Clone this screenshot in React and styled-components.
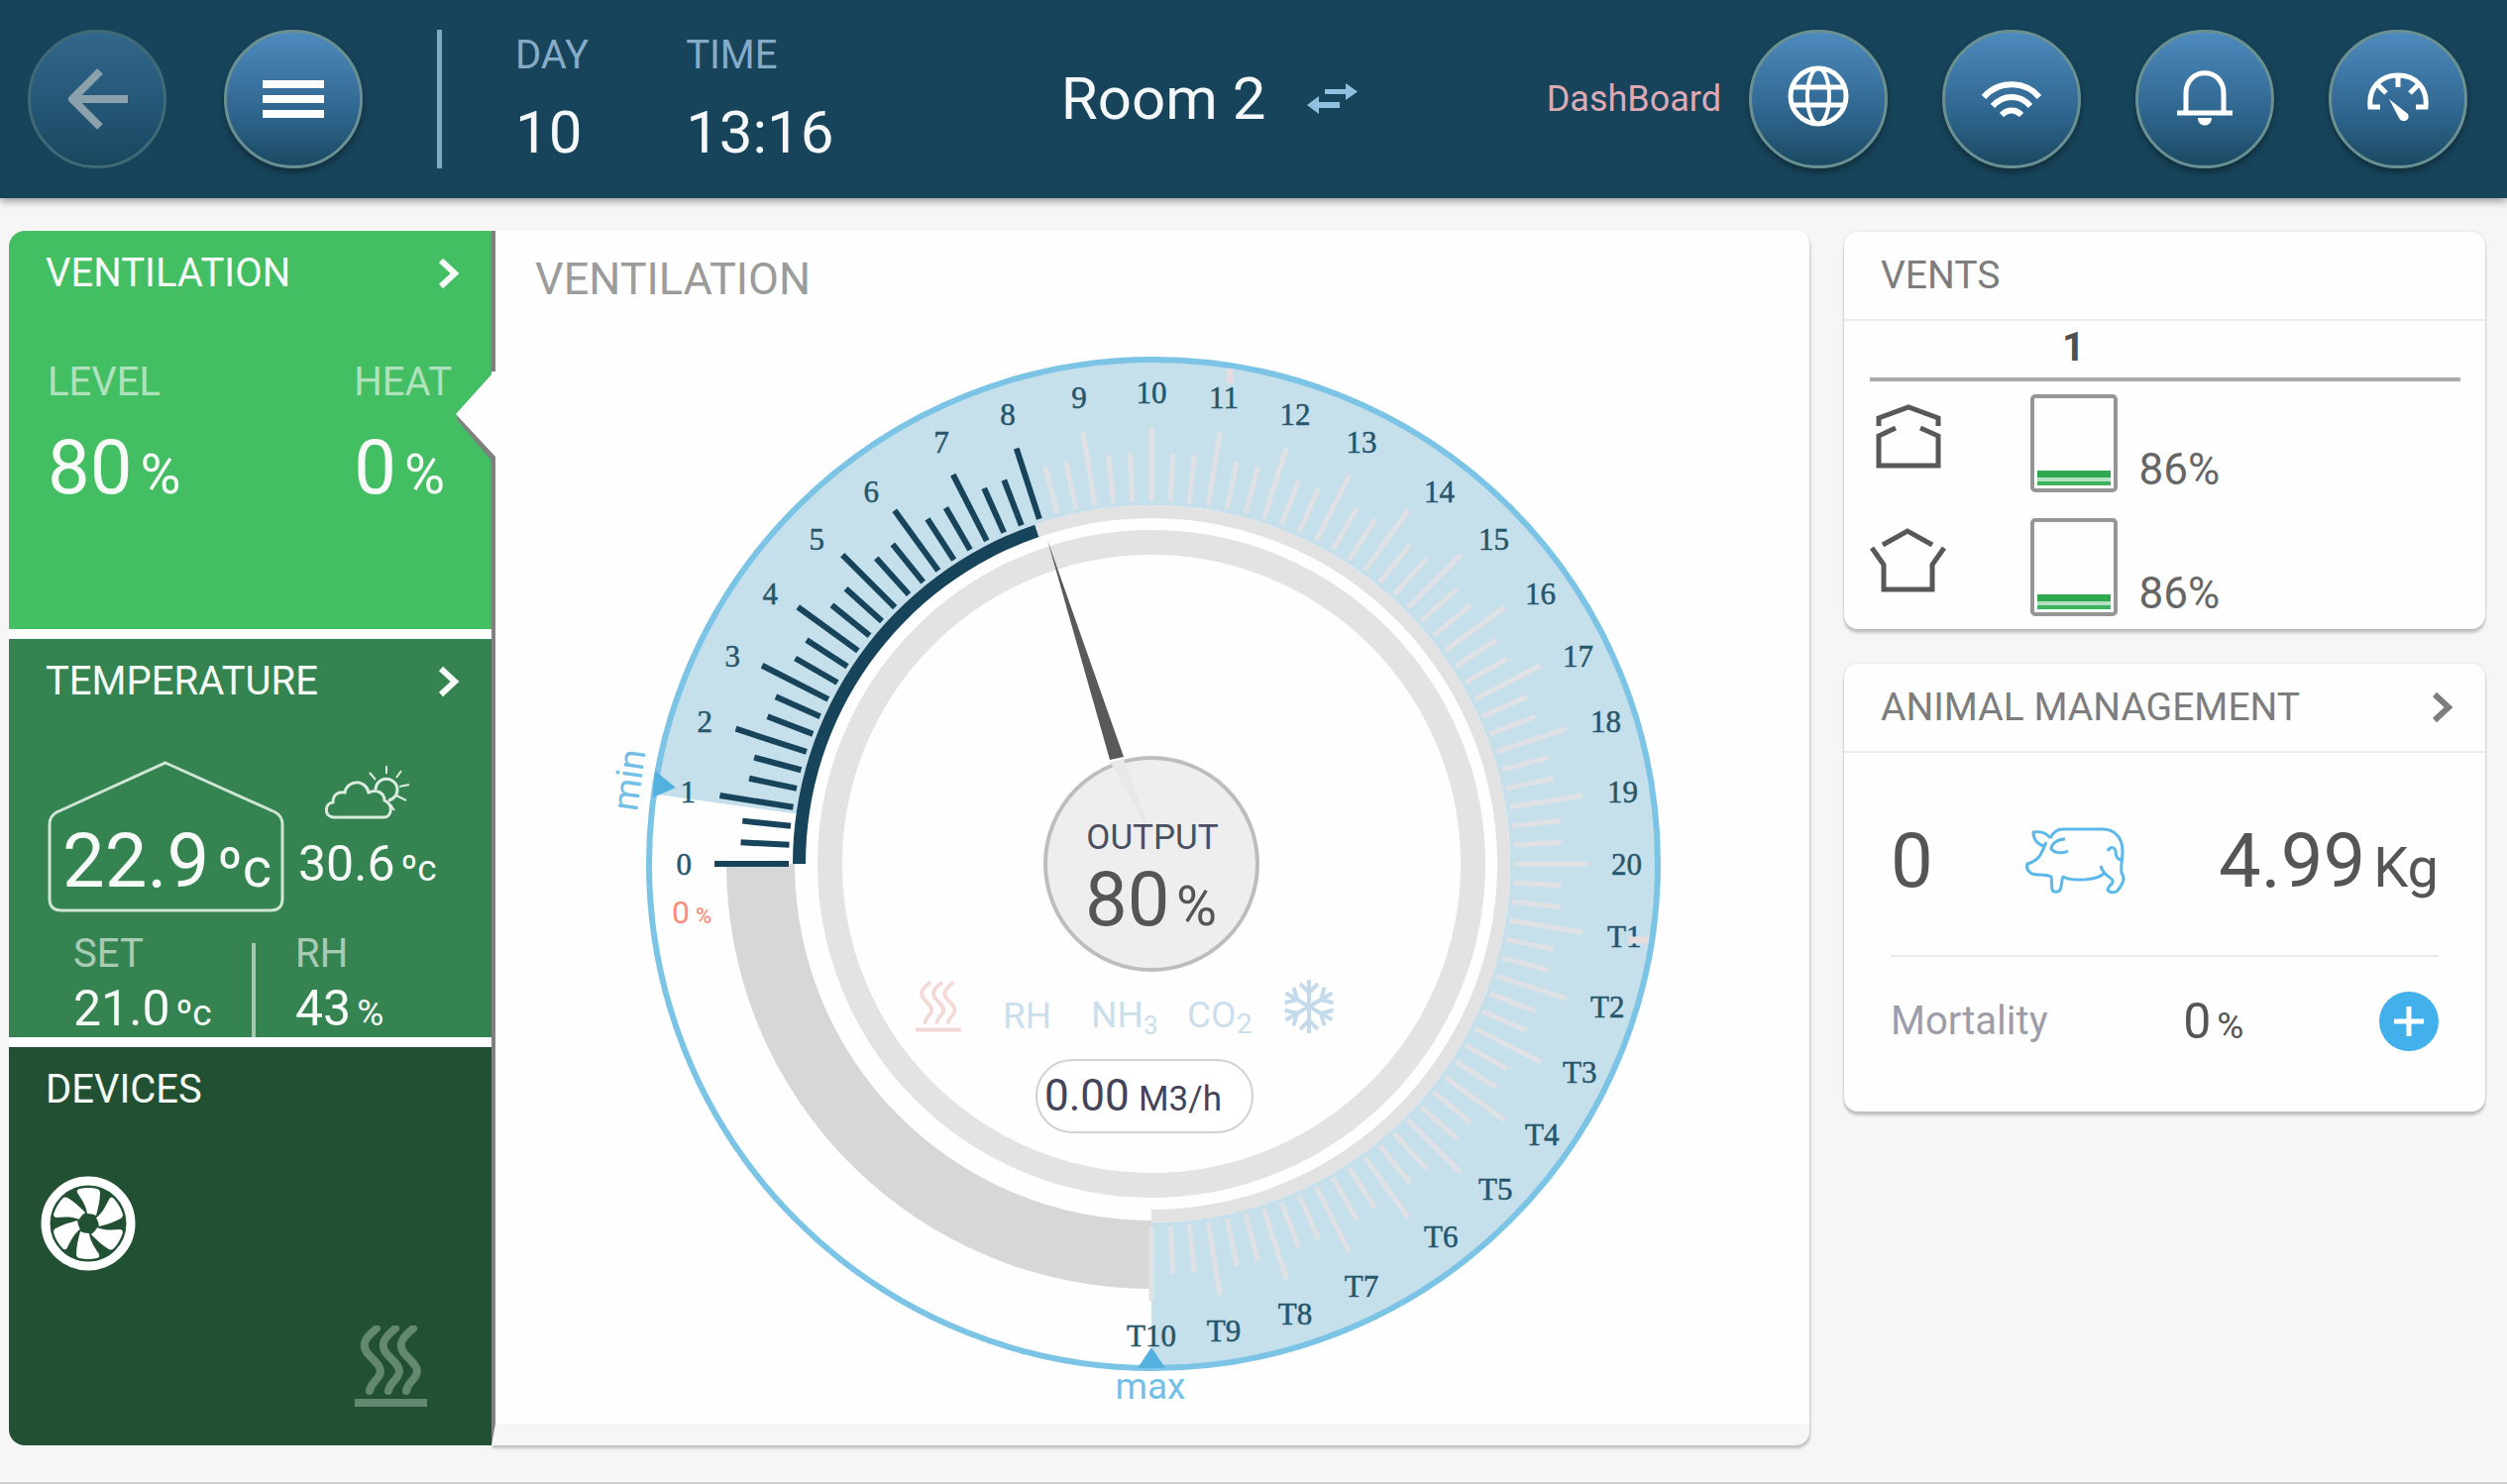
import React, { useState } from 'react';
import styled, { createGlobalStyle } from 'styled-components';

const GlobalStyle = createGlobalStyle`
  * {
    box-sizing: border-box;
    margin: 0;
    padding: 0;
  }

  body {
    font-family: Roboto, "Liberation Sans", sans-serif;
    background: #f6f6f6;
  }

  button {
    font: inherit;
    color: inherit;
    border: none;
    background: none;
    cursor: pointer;
  }

  svg {
    display: block;
  }
`;

const Page = styled.div`
  min-height: 100vh;
  border-bottom: 2px solid #cfcfcf;
`;

/* ---------- top bar ---------- */

const Header = styled.header`
  position: relative;
  display: flex;
  align-items: center;
  height: 200px;
  padding: 0 40px 0 28px;
  color: #f4f8fa;
  background: #17445a;
  box-shadow: 0 3px 8px rgba(0, 0, 0, 0.4);
`;

const ButtonGroup = styled.nav`
  display: flex;
  gap: ${(props) => props.$gap};
`;

const RoundButton = styled.button`
  display: flex;
  align-items: center;
  justify-content: center;
  width: 140px;
  height: 140px;
  border: 3px solid #6a9092;
  border-radius: 50%;
  background: linear-gradient(#4d8abd, #2f668f 60%, #1a4a62);
  box-shadow: 0 4px 7px rgba(0, 0, 0, 0.35);

  &:disabled {
    opacity: 0.5;
    box-shadow: none;
  }
`;

const HeaderLine = styled.div`
  width: 5px;
  height: 140px;
  margin: 0 74px 0 75px;
  background: #82a9c2;
`;

const Clock = styled.dl`
  display: flex;
  gap: 98px;

  dt {
    font-size: 40px;
    line-height: 48px;
    color: #86abc6;
  }

  dd {
    margin-top: 20px;
    font-size: 60px;
    line-height: 68px;
  }
`;

const RoomTitle = styled.div`
  flex: 1;
  display: flex;
  align-items: center;
  justify-content: center;
  gap: 42px;
  padding-left: 39px;

  h1 {
    font-size: 60px;
    line-height: 68px;
    font-weight: 400;
  }
`;

const DashLabel = styled.a`
  margin-right: 28px;
  font-size: 36px;
  line-height: 44px;
  color: #dcaab5;
  text-decoration: none;
`;

/* ---------- page body ---------- */

const Body = styled.main`
  display: grid;
  grid-template-columns: 487px minmax(0, 1fr) 647px;
  padding: 33px 22px 37px 9px;
`;

const Sidebar = styled.aside`
  display: flex;
  flex-direction: column;
  gap: 10px;
  background: #fff;
  border-radius: 16px 0 0 16px;
  overflow: hidden;
`;

const Tile = styled.section`
  display: flex;
  flex-direction: column;
  min-height: 402px;
  padding: 19px 32px 0 37px;
  color: #f6fbf7;
  background: ${(props) => props.$color};
`;

const TileHead = styled.div`
  display: flex;
  align-items: center;
  justify-content: space-between;

  h2 {
    font-size: 40px;
    line-height: 48px;
    font-weight: 400;
  }
`;

const StatRow = styled.div`
  display: flex;
  justify-content: space-between;
  padding: 62px 8px 0 2px;
`;

const Stat = styled.div`
  display: flex;
  flex-direction: column;
  gap: ${(props) => props.$gap};
`;

const StatLabel = styled.span`
  font-size: 40px;
  line-height: 48px;
  opacity: 0.6;
`;

const BigValue = styled.span`
  display: flex;
  align-items: baseline;
  gap: 8px;
  font-size: 76px;
  line-height: 84px;

  small {
    font-size: 56px;
    line-height: 56px;
  }
`;

const Value = styled.span`
  display: flex;
  align-items: baseline;
  gap: 6px;
  font-size: 50px;
  line-height: 56px;

  small {
    font-size: 37px;
    line-height: 37px;
  }
`;

const ClimateRow = styled.div`
  display: flex;
  align-items: flex-end;
  gap: 14px;
  margin: 56px -20px 0 2px;
`;

const House = styled.div`
  position: relative;
  width: 239px;
  padding: 59px 0 9px 15px;

  svg {
    position: absolute;
    top: 0;
    left: 0;
  }
`;

const Outside = styled.div`
  display: flex;
  flex-direction: column;
  align-items: center;
  gap: 17px;
  padding-bottom: 20px;
`;

const ClimateFoot = styled.div`
  display: flex;
  flex: 1;
  padding: 19px 0 0 28px;
`;

const SetCell = styled(Stat)`
  width: 180px;
`;

const FootLine = styled.div`
  width: 4px;
  margin: 13px 40px 0 0;
  background: #fff;
  opacity: 0.55;
`;

const DeviceArea = styled.div`
  display: flex;
  flex: 1;
  justify-content: space-between;
  padding: 62px 33px 38px 0;

  svg:first-child {
    margin-left: -6px;
  }

  svg:last-child {
    align-self: flex-end;
  }
`;

const MainPanel = styled.section`
  position: relative;
  display: flex;
  flex-direction: column;
  border-left: 4px solid #808080;
  border-bottom: 22px solid #f6f6f6;
  border-radius: 0 14px 14px 0;
  background: #fefefe;
  box-shadow: 1px 3px 3px rgba(0, 0, 0, 0.22);
  margin-right: 35px;

  h2 {
    padding: 23px 40px 1px;
    font-size: 45px;
    line-height: 52px;
    font-weight: 400;
    color: #9b9b9b;
  }
`;

const Notch = styled.svg`
  position: absolute;
  top: 142px;
  left: -40px;
`;

const Dial = styled.svg`
  width: 100%;
  height: auto;
`;

const Cards = styled.div`
  display: flex;
  flex-direction: column;
  gap: 35px;
  padding-top: 1px;
`;

const Card = styled.section`
  border-radius: 14px;
  background: #fefefe;
  box-shadow: 0 4px 3px rgba(0, 0, 0, 0.2), 0 0 3px rgba(0, 0, 0, 0.12);
`;

const CardHead = styled.div`
  display: flex;
  align-items: center;
  justify-content: space-between;
  padding: 20px 32px 20px 37px;
  border-bottom: 2px solid #ececec;
  color: #7d7d7d;

  h2 {
    font-size: 39px;
    line-height: 48px;
    font-weight: 400;
  }
`;

const VentTable = styled.table`
  width: 596px;
  margin: 0 auto;
  border-collapse: collapse;
  table-layout: fixed;

  thead tr {
    border-bottom: 4px solid #aaa;
  }

  thead th {
    padding: 3px 0 6px;
    font-size: 40px;
    line-height: 48px;
    font-weight: 700;
    color: #505050;
  }

  tbody th {
    padding-top: 23px;
    vertical-align: top;
  }

  tbody td {
    padding: 13px 0 12px;
    vertical-align: top;
  }
`;

const IconCol = styled.col`
  width: 162px;
`;

const BoxCol = styled.col`
  width: 88px;
`;

const VentBox = styled.div`
  display: flex;
  align-items: flex-end;
  height: 99px;
  padding: 3px;
  border: 4px solid #969696;
  border-radius: 5px;

  div {
    flex: 1;
    height: 15px;
    border-top: 7px solid #2fa84f;
    border-bottom: 4px solid #3db35e;
    background: #b4dfc0;
  }
`;

const VentValue = styled.span`
  display: block;
  padding: 52px 0 0 22px;
  font-size: 44px;
  line-height: 48px;
  color: #666;
`;

const HerdRow = styled.div`
  display: flex;
  align-items: center;
  justify-content: space-between;
  margin: 0 47px;
  padding: 67px 0 53px;
  border-bottom: 2px solid #e9e9e9;
  color: #555;
`;

const MortalityRow = styled.div`
  display: flex;
  align-items: center;
  justify-content: space-between;
  margin: 0 47px;
  padding: 35px 0 61px;
  color: #555;
`;

const MortalityLabel = styled.span`
  font-size: 40px;
  line-height: 48px;
  color: #9d9da9;
`;

const AddButton = styled.button`
  display: flex;
  align-items: center;
  justify-content: center;
  width: 60px;
  height: 60px;
  border-radius: 50%;
  background: #42b0ea;
`;

/* ---------- icons ---------- */

const BackIcon = () => (
  <svg width="62" height="62" viewBox="0 0 62 62" fill="none" stroke="#fff" strokeWidth="8">
    <path d="M62 31H7M34 3L6 31l28 28" strokeLinejoin="round" />
  </svg>
);

const MenuIcon = () => (
  <svg width="62" height="38" viewBox="0 0 62 38" fill="#fff">
    <rect width="62" height="8" />
    <rect y="15" width="62" height="8" />
    <rect y="30" width="62" height="8" />
  </svg>
);

const SwapIcon = () => (
  <svg width="51" height="32" viewBox="0 0 51 32" fill="#8fc0df">
    <path d="M18 6h21V0l12 8.500L39 17v-6H18z" />
    <path d="M33 25H12v6L0 22l12-9v6h21z" />
  </svg>
);

const GlobeIcon = () => (
  <svg width="62" height="68" viewBox="0 0 62 68" fill="none" stroke="#fff" strokeWidth="5">
    <circle cx="31" cy="31" r="28" />
    <ellipse cx="31" cy="31" rx="11" ry="28" strokeWidth="4" />
    <path d="M5 22h52M5 40h52" />
  </svg>
);

const WifiIcon = () => (
  <svg width="60" height="36" viewBox="0 0 60 36" fill="none" stroke="#fff" strokeWidth="6">
    <path d="M2 16C17 -1 43 -1 58 16M11 25c11-12 27-12 38 0M20 34c6-6 14-6 20 0" />
  </svg>
);

const BellIcon = () => (
  <svg width="56" height="58" viewBox="0 0 56 58" fill="none" stroke="#fff" strokeWidth="5">
    <path d="M9 42V23C9 -4 47 -4 47 23v19" />
    <path d="M0 43h56" />
    <path d="M21 48h14c0 10-14 10-14 0z" fill="#fff" stroke="none" />
  </svg>
);

const GaugeIcon = () => (
  <svg width="62" height="54" viewBox="0 0 62 54" fill="none" stroke="#fff" strokeWidth="5">
    <path d="M13 35H3C1 16 13 3 31 3s30 13 28 32H49M31 3v12M11 13l8 8M51 13l-8 8" />
    <path d="M22 27l19 15c3 7-6 10-9 4z" fill="#fff" stroke="none" />
  </svg>
);

const ChevronIcon = () => (
  <svg width="23" height="32" viewBox="0 0 23 32" fill="none" stroke="currentColor" strokeWidth="6">
    <path d="M4 3l14 13L4 29" />
  </svg>
);

const CloudIcon = () => (
  <svg width="86" height="54" viewBox="0 0 86 54" fill="none" stroke="#dcebe0" strokeWidth="3">
    <path d="M9 52C-1 52-1 38 8 37C8 29 13 26 20 27C22 14 41 13 44 27C53 23 60 28 60 35C69 39 68 52 59 52z" />
    <path d="M51 24a11 11 0 1 1 13 11" />
    <path d="M62 8V0M72 12l5-7M75 21l10-2M72 30l10 5M51 14l-6-7M66 39l4 6" strokeWidth="2" />
  </svg>
);

const FanIcon = () => (
  <svg width="98" height="98" viewBox="-49 -49 98 98" fill="#fff">
    <circle r="43" fill="none" stroke="#fff" strokeWidth="9" />
    {[0, 60, 120, 180, 240, 300].map((angle) => (
      <path
        key={angle}
        transform={`rotate(${angle})`}
        d="M-1 -10C-2 -18 -7 -25 -11 -31Q-12 -34 -9 -35Q1 -37 9 -35Q12 -34 12 -31C12 -23 10 -16 8 -8Q4 -10 -1 -10z"
      />
    ))}
  </svg>
);

const wave = 'M22 3C10 13 7 19 12 27C18 35 29 41 25 50C22 56 16 59 15 66';

const HeatIcon = ({ x, y, width, height, color, thickness }) => (
  <svg x={x} y={y} width={width} height={height} viewBox="0 0 73 83" fill="none" stroke={color} strokeWidth={thickness}>
    <path d={wave} strokeLinecap="round" />
    <path d={wave} strokeLinecap="round" transform="translate(19 0)" />
    <path d={wave} strokeLinecap="round" transform="translate(37 0)" />
    <path d="M0 78h73" />
  </svg>
);

const RoofVentIcon = () => (
  <svg width="77" height="66" viewBox="0 0 77 66" fill="none" stroke="#585858" strokeWidth="5">
    <path d="M9 22v-8L39 3l30 11v8" />
    <path d="M26 24L9 32v30h60V32l-18-8" />
  </svg>
);

const WallVentIcon = () => (
  <svg width="77" height="66" viewBox="0 0 77 66" fill="none" stroke="#585858" strokeWidth="5">
    <path d="M13 17L38 3l25 14" />
    <path d="M2 20l12 17v25h49V37l12-17" />
  </svg>
);

const PigIcon = () => (
  <svg width="102" height="68" viewBox="0 0 102 68" fill="none" stroke="#5cb8e8" strokeWidth="3" strokeLinejoin="round">
    <path d="M25 11C28 5 32 2 38 2h40c13 0 20 10 20 22c0 8-2 14-1 22c4 6 2 10-4 18c-3 3-9 2-10-1c0-4 6-5 5-9c-1-4-9-4-12-15" />
    <path d="M80 46C73 54 48 55 38 50c-2 5-1 9-3 13c-1 3-7 3-8 0c-1-5 0-9-1-13C19 46 10 50 5 46C1 43 1 40 2 37C13 34 16 28 21 15" />
    <path d="M25 11C20 4 14 4 8 5c0 7 4 13 12 14" />
    <path d="M40 12c-8 0-14 5-14 10c3 4 12 5 17 2" />
    <path d="M83 24c3-5 7-4 8 0c0 5 1 8 5 9" />
  </svg>
);

const PlusIcon = () => (
  <svg width="30" height="30" viewBox="0 0 30 30" stroke="#fff" strokeWidth="5">
    <path d="M15 0v30M0 15h30" />
  </svg>
);

/* ---------- dial ---------- */

// angle 0 points left, goes clockwise
const point = (angle, radius) => {
  const rad = (angle * Math.PI) / 180;
  return [-Math.cos(rad) * radius, -Math.sin(rad) * radius];
};

const ringPath = (from, to, outer, inner) => {
  const large = to - from > 180 ? 1 : 0;
  return [
    `M${point(from, outer)}`,
    `A${outer} ${outer} 0 ${large} 1 ${point(to, outer)}`,
    `L${point(to, inner)}`,
    `A${inner} ${inner} 0 ${large} 0 ${point(from, inner)}`,
    'Z',
  ].join(' ');
};

// label anchors for a quarter of the dial, from the side up to the top
const anchors = [
  [464, 0], [460, 73], [443, 144], [415, 210], [377, 273],
  [330, 328], [275, 376], [212, 426], [145, 454], [73, 471], [0, 476],
];

const dialLabels = Array.from({ length: 31 }, (_, i) => {
  const step = i <= 10 ? i : Math.abs(20 - i);
  const [x, y] = anchors[step];
  let anchor = 'middle';
  if (step < 7) anchor = i < 10 ? 'end' : 'start';
  return {
    text: i <= 20 ? String(i) : `T${i - 20}`,
    x: i < 10 ? -x : x,
    y: (i <= 20 ? -y : y) + 11,
    anchor,
  };
});

const ticks = Array.from({ length: 91 }, (_, i) => i);

const LabelText = styled.text`
  font-family: "Liberation Serif", serif;
  font-size: 31px;
  fill: #26566b;
  stroke: #26566b;
  stroke-width: 0.5px;
`;

const DialText = styled.text`
  font-size: ${(props) => props.$size}px;
  fill: ${(props) => props.$color};
`;

const VentDial = () => (
  <Dial viewBox="-662 -563 1326 1126" role="img" aria-label="Ventilation output">
    <path d={ringPath(8, 270, 509, 362)} fill="#c5dfeb" />
    <circle cx="2" r="509" fill="none" stroke="#7cc4e6" strokeWidth="6" />
    <path d={ringPath(270, 360, 429, 360)} fill="#d7d7d7" />
    <path d={ringPath(71, 270, 362, 349)} fill="#e2e2e3" />
    <path d={ringPath(0, 71, 362, 349)} fill="#17445a" />
    <circle r="324.500" fill="none" stroke="#e3e3e3" strokeWidth="25" />

    {ticks.map((i) => {
      const [x1, y1] = point(i * 3, 366);
      const [x2, y2] = point(i * 3, i % 3 === 0 ? 441 : 415);
      const active = i * 3 <= 72;
      return (
        <line
          key={i}
          x1={x1}
          y1={y1}
          x2={x2}
          y2={y2}
          stroke={active ? '#17445a' : '#e0e1e4'}
          strokeWidth={active ? 6 : 5}
        />
      );
    })}

    <path d="M-501 -94L-480 -77L-503 -67z" fill="#53b0df" />
    <path d="M0 488L14 509H-14z" fill="#53b0df" />

    {dialLabels.map((label) => (
      <LabelText key={label.text} x={label.x} y={label.y} textAnchor={label.anchor}>
        {label.text}
      </LabelText>
    ))}
    <path d="M79 -500v15M482 77h20" stroke="#e4dcdf" strokeWidth="7" />

    <DialText $size={37} $color="#72c0e6" textAnchor="middle" transform="translate(-515 -83) rotate(-82)">
      min
    </DialText>
    <DialText $size={37} $color="#72c0e6" textAnchor="middle" x="-1" y="540">max</DialText>
    <DialText $size={32} $color="#f98d7a" x="-484" y="60">0</DialText>
    <DialText $size={22} $color="#f98d7a" x="-460" y="60" fontWeight="500">%</DialText>

    <path d="M-105 -327L-28 -108L-42 -105z" fill="#595959" />
    <circle r="107" fill="#eee" stroke="#bdbdbd" strokeWidth="4" />
    <path d="M-42 -103L-28 -106L0 -30z" fill="#e8e8e8" />

    <DialText $size={35} $color="#4b4f61" textAnchor="middle" x="1" y="-15">OUTPUT</DialText>
    <DialText $size={76} $color="#555" x="-67" y="62">80</DialText>
    <DialText $size={56} $color="#555" x="25" y="62">%</DialText>

    <HeatIcon x={-238} y={118} width={46} height={53} color="#f3d8d5" thickness={6} />
    <DialText $size={37} $color="#cbdeec" x="-150" y="166">RH</DialText>
    <DialText $size={37} $color="#cbdeec" x="-61" y="165">NH</DialText>
    <DialText $size={26} $color="#cbdeec" x="-8" y="172">3</DialText>
    <DialText $size={37} $color="#cbdeec" x="36" y="165">CO</DialText>
    <DialText $size={28} $color="#cbdeec" x="86" y="171">2</DialText>
    <g transform="translate(159 144)" fill="none" stroke="#c4daea" strokeWidth="4">
      {[0, 60, 120, 180, 240, 300].map((angle) => (
        <path key={angle} transform={`rotate(${angle})`} d="M0 0V-27M-9 -23l9 9l9 -9" />
      ))}
    </g>

    <rect x="-116" y="198" width="218" height="73" rx="36" fill="#fff" stroke="#d2d2d4" strokeWidth="2" />
    <DialText $size={44} $color="#43445a" x="-108" y="249">0.00</DialText>
    <DialText $size={35} $color="#43445a" x="-13" y="249">M3/h</DialText>
  </Dial>
);

const vents = [
  { name: 'Roof vent', icon: <RoofVentIcon />, value: 86 },
  { name: 'Wall vent', icon: <WallVentIcon />, value: 86 },
];

const App = () => {
  const [mortality, setMortality] = useState(0);

  return (
    <Page>
      <GlobalStyle />
      <Header>
        <ButtonGroup $gap="58px">
          <RoundButton aria-label="Back" disabled><BackIcon /></RoundButton>
          <RoundButton aria-label="Menu"><MenuIcon /></RoundButton>
        </ButtonGroup>
        <HeaderLine />
        <Clock>
          <div>
            <dt>DAY</dt>
            <dd>10</dd>
          </div>
          <div>
            <dt>TIME</dt>
            <dd>13:16</dd>
          </div>
        </Clock>
        <RoomTitle>
          <h1>Room 2</h1>
          <button aria-label="Switch room"><SwapIcon /></button>
        </RoomTitle>
        <DashLabel href="#dashboard">DashBoard</DashLabel>
        <ButtonGroup $gap="55px">
          <RoundButton aria-label="Language"><GlobeIcon /></RoundButton>
          <RoundButton aria-label="Network"><WifiIcon /></RoundButton>
          <RoundButton aria-label="Alarms"><BellIcon /></RoundButton>
          <RoundButton aria-label="Dashboard"><GaugeIcon /></RoundButton>
        </ButtonGroup>
      </Header>

      <Body>
        <Sidebar>
          <Tile $color="#43be63">
            <TileHead>
              <h2>VENTILATION</h2>
              <button aria-label="Open ventilation"><ChevronIcon /></button>
            </TileHead>
            <StatRow>
              <Stat $gap="20px">
                <StatLabel>LEVEL</StatLabel>
                <BigValue>80<small>%</small></BigValue>
              </Stat>
              <Stat $gap="20px">
                <StatLabel>HEAT</StatLabel>
                <BigValue>0<small>%</small></BigValue>
              </Stat>
            </StatRow>
          </Tile>

          <Tile $color="#348351">
            <TileHead>
              <h2>TEMPERATURE</h2>
              <button aria-label="Open temperature"><ChevronIcon /></button>
            </TileHead>
            <ClimateRow>
              <House>
                <svg width="239" height="153" viewBox="0 0 239 153" fill="none" stroke="#cfe6d6" strokeWidth="3">
                  <path d="M119 2L230 52Q237 56 237 64V139Q237 151 225 151H14Q2 151 2 139V64Q2 56 9 52z" />
                </svg>
                <BigValue>22.9<small>ºc</small></BigValue>
              </House>
              <Outside>
                <CloudIcon />
                <Value>30.6<small>ºc</small></Value>
              </Outside>
            </ClimateRow>
            <ClimateFoot>
              <SetCell $gap="3px">
                <StatLabel>SET</StatLabel>
                <Value>21.0<small>ºc</small></Value>
              </SetCell>
              <FootLine />
              <Stat $gap="3px">
                <StatLabel>RH</StatLabel>
                <Value>43<small>%</small></Value>
              </Stat>
            </ClimateFoot>
          </Tile>

          <Tile $color="#225033">
            <TileHead>
              <h2>DEVICES</h2>
            </TileHead>
            <DeviceArea>
              <FanIcon />
              <HeatIcon width={73} height={83} color="#64886f" thickness={8} />
            </DeviceArea>
          </Tile>
        </Sidebar>

        <MainPanel>
          <Notch width="40" height="92" viewBox="0 0 40 92">
            <path d="M1 43L40 86V90H36L2 50z" fill="#808080" />
            <path d="M0 43L36 3V0H40V86z" fill="#fefefe" />
          </Notch>
          <h2>VENTILATION</h2>
          <VentDial />
        </MainPanel>

        <Cards>
          <Card>
            <CardHead>
              <h2>VENTS</h2>
            </CardHead>
            <VentTable>
              <colgroup>
                <IconCol />
                <BoxCol />
                <col />
              </colgroup>
              <thead>
                <tr>
                  <td />
                  <th scope="col">1</th>
                  <td />
                </tr>
              </thead>
              <tbody>
                {vents.map((vent) => (
                  <tr key={vent.name}>
                    <th scope="row" aria-label={vent.name}>{vent.icon}</th>
                    <td><VentBox><div /></VentBox></td>
                    <td><VentValue>{vent.value}%</VentValue></td>
                  </tr>
                ))}
              </tbody>
            </VentTable>
          </Card>

          <Card>
            <CardHead>
              <h2>ANIMAL MANAGEMENT</h2>
              <button aria-label="Open animal management"><ChevronIcon /></button>
            </CardHead>
            <HerdRow>
              <BigValue>0</BigValue>
              <PigIcon />
              <BigValue>4.99<small>Kg</small></BigValue>
            </HerdRow>
            <MortalityRow>
              <MortalityLabel>Mortality</MortalityLabel>
              <Value>{mortality}<small>%</small></Value>
              <AddButton aria-label="Add mortality" onClick={() => setMortality(mortality + 1)}>
                <PlusIcon />
              </AddButton>
            </MortalityRow>
          </Card>
        </Cards>
      </Body>
    </Page>
  );
};

export default App;
